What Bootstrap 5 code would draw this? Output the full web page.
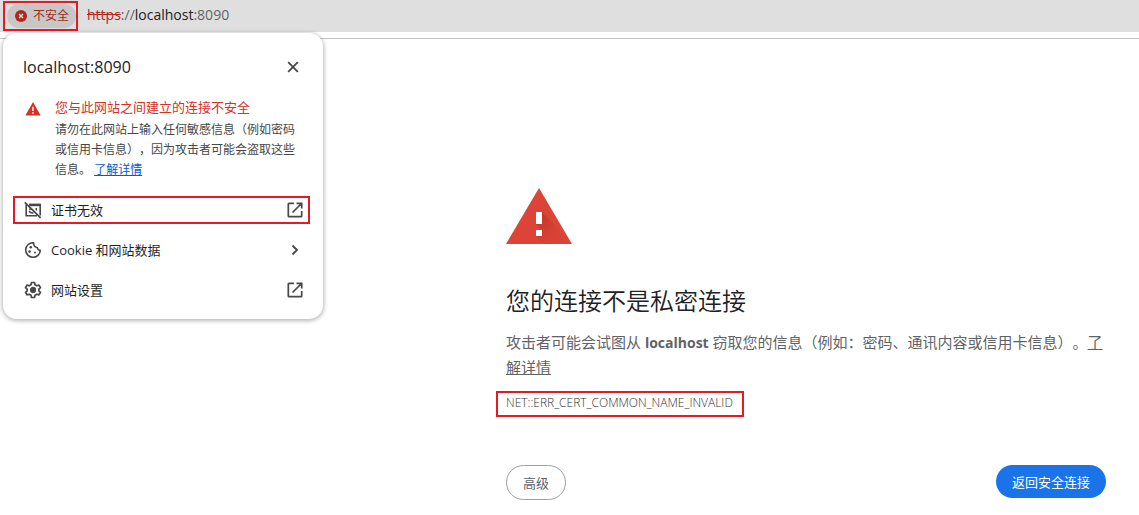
<!DOCTYPE html>
<html lang="zh-CN">
<head>
<meta charset="utf-8">
<meta name="viewport" content="width=device-width, initial-scale=1">
<title>隐私设置错误</title>
<link href="https://cdn.jsdelivr.net/npm/bootstrap@5.3.0/dist/css/bootstrap.min.css" rel="stylesheet">
<style>
  body { font-family: "Open Sans", "Noto Sans CJK SC", sans-serif; font-size: 13px; line-height: 20px; color: #202124; background: #fff; text-spacing-trim: space-all; }
  button { font: inherit; color: inherit; }
  svg { display: block; flex: none; }
  .marked { border: 2px solid #e41b23 !important; }
  .toolbar { border-bottom: 1px solid #c4c4c4; padding-bottom: 6px; }
  .omnibox { background: #dfdfdf; height: 32px; padding: 1px 3px; }
  .chip-frame { padding: 0 0 1px 2px; height: 30px; }
  .chip { height: 24px; padding: 1px 7px 0 8px; gap: 6px; border: 0; border-radius: 12px; background: #c7c7c7; color: #a52714; font-size: 12px; }
  .address { font-size: 14px; color: #5f6368; padding: 0 0 2px 9px; }
  .address s { color: #b3261e; }
  .address b { font-weight: 400; color: #202124; }
  .site-info { position: absolute; top: 33px; left: 3px; width: 320px; border-radius: 14px; background: #fff; box-shadow: 0 1px 4px 1px rgba(0,0,0,.28); padding: 24px 13px 15px 10px; }
  .site-head { padding: 0 9px 0 10px; }
  .site-title { font-size: 16px; line-height: 20px; font-weight: 400; }
  .close-btn { border: 0; background: none; padding: 0; color: #474747; }
  .notice { padding: 20px 10px 0 11px; gap: 13px; margin-bottom: 16px; }
  .notice h2 { font-size: 13px; line-height: 20px; color: #d93025; margin: 0; font-weight: 400; }
  .notice p { font-size: 12px; line-height: 20px; color: #474747; margin: 3px 0 0; }
  .notice a { color: #0b57d0; }
  .entries { gap: 12px; }
  .entry { height: 28px; padding: 0 3px 0 8px; gap: 8px; border: 2px solid transparent; background: none; color: #1f1f1f; }
  .entry svg { color: #474747; }
  .interstitial { width: 100%; max-width: 633px; padding: 149px 33px 15px 0; color: #5f6368; }
  .interstitial h1 { font-size: 24px; line-height: 30px; font-weight: 350; color: #202124; margin: 42px 0 14px; }
  .explain { font-size: 15px; line-height: 24px; margin: 0 0 12px; }
  .explain a { color: inherit; }
  .explain strong { font-size: 14px; }
  .code { font-size: 12px; font-weight: 300; color: #303236; line-height: 16px; height: 26px; padding: 2px 9px 3px 8px; margin-left: -10px; }
  .actions { margin-top: 48px; }
  .pill { font-size: 13px; line-height: 20px; border-radius: 20px; padding: 7px 16px 6px; }
  .pill-outline { border: 1px solid #9aa0a6; color: #5f6368; height: 35px; }
  .pill-main { background: #1a73e8; color: #fff; border: 0; height: 33px; }
</style>
</head>
<body>
<header class="toolbar">
  <div class="omnibox d-flex align-items-center">
    <div class="chip-frame marked d-flex align-items-center">
      <button type="button" class="chip d-flex align-items-center">
        <svg width="12" height="12" viewBox="0 0 12 12"><circle cx="6" cy="6" r="6" fill="#b3261e"/><path d="M4 4l4 4M8 4l-4 4" stroke="#dfdfdf" stroke-width="1.4"/></svg>
        <span>不安全</span>
      </button>
    </div>
    <div class="address"><s>https</s>://<b>localhost</b>:8090</div>
  </div>
</header>

<section class="site-info" aria-label="网站信息">
  <div class="site-head d-flex align-items-center justify-content-between">
    <div class="site-title">localhost:8090</div>
    <button type="button" class="close-btn" aria-label="关闭">
      <svg width="16" height="16" viewBox="0 0 16 16"><path d="M3.2 3.2l9.6 9.6M12.8 3.2l-9.6 9.6" stroke="currentColor" stroke-width="1.8"/></svg>
    </button>
  </div>
  <div class="notice d-flex">
    <svg class="mt-1" width="18" height="16" viewBox="0 0 18 16"><path d="M9 1l7.600 13.500H1.400z" fill="#d93025"/><path d="M9 5.800v4.200M9 11.200v1.600" stroke="#fff" stroke-width="1.5"/></svg>
    <div>
      <h2>您与此网站之间建立的连接不安全</h2>
      <p>请勿在此网站上输入任何敏感信息（例如密码或信用卡信息），因为攻击者可能会盗取这些信息。 <a href="#">了解详情</a></p>
    </div>
  </div>
  <div class="entries d-flex flex-column">
    <button type="button" class="entry marked d-flex align-items-center">
      <svg width="20" height="20" viewBox="0 0 20 20" fill="none" stroke="currentColor"><path d="M6 4.600H17.200V15.500M3.200 4.500V15.800H14" stroke-width="1.600"/><path d="M6.500 5h11" stroke-width="2.400"/><path d="M1.800 2.300l15.800 15.500" stroke-width="1.700"/><path d="M13.300 8v2.500M6 11.300q1.500 1.900 4.500 1.600M7 8.500v1.800" stroke-width="1.500"/></svg>
      <span>证书无效</span>
      <svg class="ms-auto" width="20" height="20" viewBox="0 0 20 20" fill="none" stroke="currentColor" stroke-width="1.7"><path d="M9 3.300H4.100q-.8 0-.8.8v11.800q0 .8.8.8h11.800q.8 0 .8-.8V11M11.500 3.300h5.200v5.200M16.500 3.500L7.500 12.500"/></svg>
    </button>
    <button type="button" class="entry d-flex align-items-center">
      <svg width="20" height="20" viewBox="0 0 20 20" fill="none" stroke="currentColor" stroke-width="1.6"><path d="M10.500 2.700A7.300 7.300 0 1 0 17.300 10.200Q14.700 10.500 14.300 7.500Q10.700 7.200 10.500 2.700Z" stroke-linejoin="round"/><g fill="currentColor" stroke="none"><circle cx="7.800" cy="7.300" r="1.300"/><circle cx="6.600" cy="11.600" r="1.300"/><circle cx="12" cy="12.600" r="1"/></g></svg>
      <span>Cookie 和网站数据</span>
      <svg class="ms-auto" width="20" height="20" viewBox="0 0 20 20" fill="none" stroke="currentColor" stroke-width="1.800"><path d="M7.500 5.500L12 10l-4.500 4.500"/></svg>
    </button>
    <button type="button" class="entry d-flex align-items-center">
      <svg width="20" height="20" viewBox="0 0 20 20" fill="none" stroke="currentColor" stroke-width="1.700" stroke-linejoin="round"><path d="M8.500 2.500h3l.5 2.300 1.800 1 2.200-.7 1.500 2.600-1.700 1.500v1.600l1.700 1.500-1.500 2.600-2.200-.7-1.800 1-.5 2.300h-3L8 15.200l-1.800-1-2.200.7-1.500-2.600 1.700-1.500V9.200L2.500 7.700 4 5.100l2.200.7 1.800-1z"/><circle cx="10" cy="10" r="2.300" fill="currentColor"/></svg>
      <span>网站设置</span>
      <svg class="ms-auto" width="20" height="20" viewBox="0 0 20 20" fill="none" stroke="currentColor" stroke-width="1.7"><path d="M9 3.300H4.100q-.8 0-.8.8v11.800q0 .8.8.8h11.800q.8 0 .8-.8V11M11.500 3.300h5.200v5.200M16.500 3.500L7.500 12.500"/></svg>
    </button>
  </div>
</section>

<main class="interstitial ms-auto">
  <svg width="66" height="56" viewBox="0 0 66 56">
    <defs><linearGradient id="shade" gradientUnits="userSpaceOnUse" x1="33" y1="30" x2="50" y2="47"><stop offset="0" stop-color="#a82a20" stop-opacity=".5"/><stop offset="1" stop-color="#c63a2e" stop-opacity=".15"/></linearGradient></defs>
    <path d="M33 0l33 56H0z" fill="#db4437"/>
    <path d="M36 24L48 36 59.800 56H38L30 48l6-6-6-6z" fill="url(#shade)"/>
    <path d="M30 24h6v12h-6zM30 42h6v6h-6z" fill="#fff"/>
  </svg>
  <h1>您的连接不是私密连接</h1>
  <p class="explain">攻击者可能会试图从 <strong>localhost</strong> 窃取您的信息（例如：密码、通讯内容或信用卡信息）。<a href="#">了解详情</a></p>
  <div class="code marked d-inline-block">NET::ERR_CERT_COMMON_NAME_INVALID</div>
  <div class="actions d-flex justify-content-between align-items-start">
    <button type="button" class="btn pill pill-outline">高级</button>
    <button type="button" class="btn pill pill-main">返回安全连接</button>
  </div>
</main>
<script src="https://cdn.jsdelivr.net/npm/bootstrap@5.3.0/dist/js/bootstrap.bundle.min.js"></script>
</body>
</html>
